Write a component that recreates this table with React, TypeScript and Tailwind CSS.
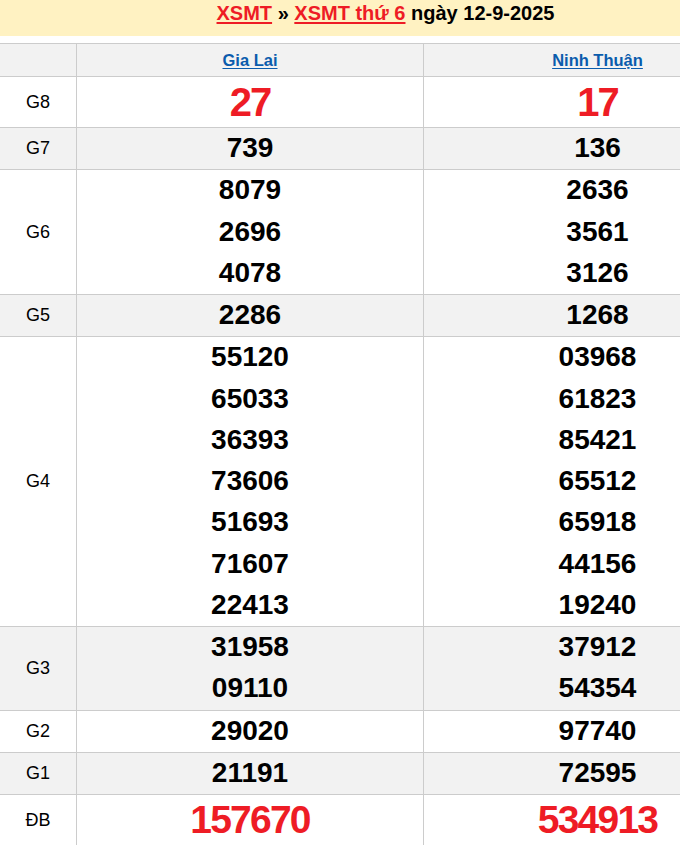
import React from "react";

type Row = { label: string; a: string[]; b: string[]; kind?: "big" | "db"; gray: boolean };

const rows: Row[] = [
  { label: "G8", a: ["27"], b: ["17"], kind: "big", gray: false },
  { label: "G7", a: ["739"], b: ["136"], gray: true },
  { label: "G6", a: ["8079", "2696", "4078"], b: ["2636", "3561", "3126"], gray: false },
  { label: "G5", a: ["2286"], b: ["1268"], gray: true },
  {
    label: "G4",
    a: ["55120", "65033", "36393", "73606", "51693", "71607", "22413"],
    b: ["03968", "61823", "85421", "65512", "65918", "44156", "19240"],
    gray: false,
  },
  { label: "G3", a: ["31958", "09110"], b: ["37912", "54354"], gray: true },
  { label: "G2", a: ["29020"], b: ["97740"], gray: false },
  { label: "G1", a: ["21191"], b: ["72595"], gray: true },
  { label: "ĐB", a: ["157670"], b: ["534913"], kind: "db", gray: false },
];

function Nums({ list, kind }: { list: string[]; kind?: "big" | "db" }) {
  if (kind === "big") {
    return (
      <div className="h-[50px] leading-[50px] text-[40px] font-bold tracking-[-2px] text-[#ee1c25]">
        {list[0]}
      </div>
    );
  }
  if (kind === "db") {
    return (
      <div className="h-[50px] leading-[50px] text-[39px] font-bold tracking-[-1.8px] text-[#ee1c25]">
        {list[0]}
      </div>
    );
  }
  return (
    <div className="flex flex-col">
      {list.map((n, i) => (
        <div key={i} className="h-[41.25px] leading-[40px] text-[28px] font-bold text-black">
          {n}
        </div>
      ))}
    </div>
  );
}

export default function App() {
  return (
    <div className="w-[680px] overflow-hidden bg-white" style={{ fontFamily: '"Liberation Sans", Arial, sans-serif' }}>
      <div className="w-[771px]">
        <div className="h-[36px] bg-[#fff2c2] pt-[1px] text-center text-[20px] font-bold leading-[24px] text-black">
          <a className="text-[#ee1c25] underline decoration-[2px] underline-offset-[2px]" href="#">
            XSMT
          </a>{" "}
          »{" "}
          <a className="text-[#ee1c25] underline decoration-[2px] underline-offset-[2px]" href="#">
            XSMT thứ 6
          </a>{" "}
          ngày 12-9-2025
        </div>
        <div className="mt-[7px] border-t border-[#cccccc]">
          <div className="flex h-[32px] bg-[#f2f2f2]">
            <div className="w-[77px] border-r border-[#cccccc]" />
            <div className="flex w-[347px] items-center justify-center border-r border-[#cccccc]">
              <a href="#" className="text-[16.5px] font-bold leading-[20px] text-[#0b5cad] underline underline-offset-[2px]">
                Gia Lai
              </a>
            </div>
            <div className="flex w-[347px] items-center justify-center">
              <a href="#" className="text-[16.5px] font-bold leading-[20px] text-[#0b5cad] underline underline-offset-[2px]">
                Ninh Thuận
              </a>
            </div>
          </div>
          {rows.map((r) => (
            <div
              key={r.label}
              className={`flex border-t border-[#cccccc] ${r.gray ? "bg-[#f2f2f2]" : "bg-white"}`}
            >
              <div className="flex w-[77px] items-center justify-center border-r border-[#cccccc] text-[18px] text-black">
                {r.label}
              </div>
              <div className="w-[347px] border-r border-[#cccccc] text-center">
                <Nums list={r.a} kind={r.kind} />
              </div>
              <div className="w-[347px] text-center">
                <Nums list={r.b} kind={r.kind} />
              </div>
            </div>
          ))}
        </div>
      </div>
    </div>
  );
}
